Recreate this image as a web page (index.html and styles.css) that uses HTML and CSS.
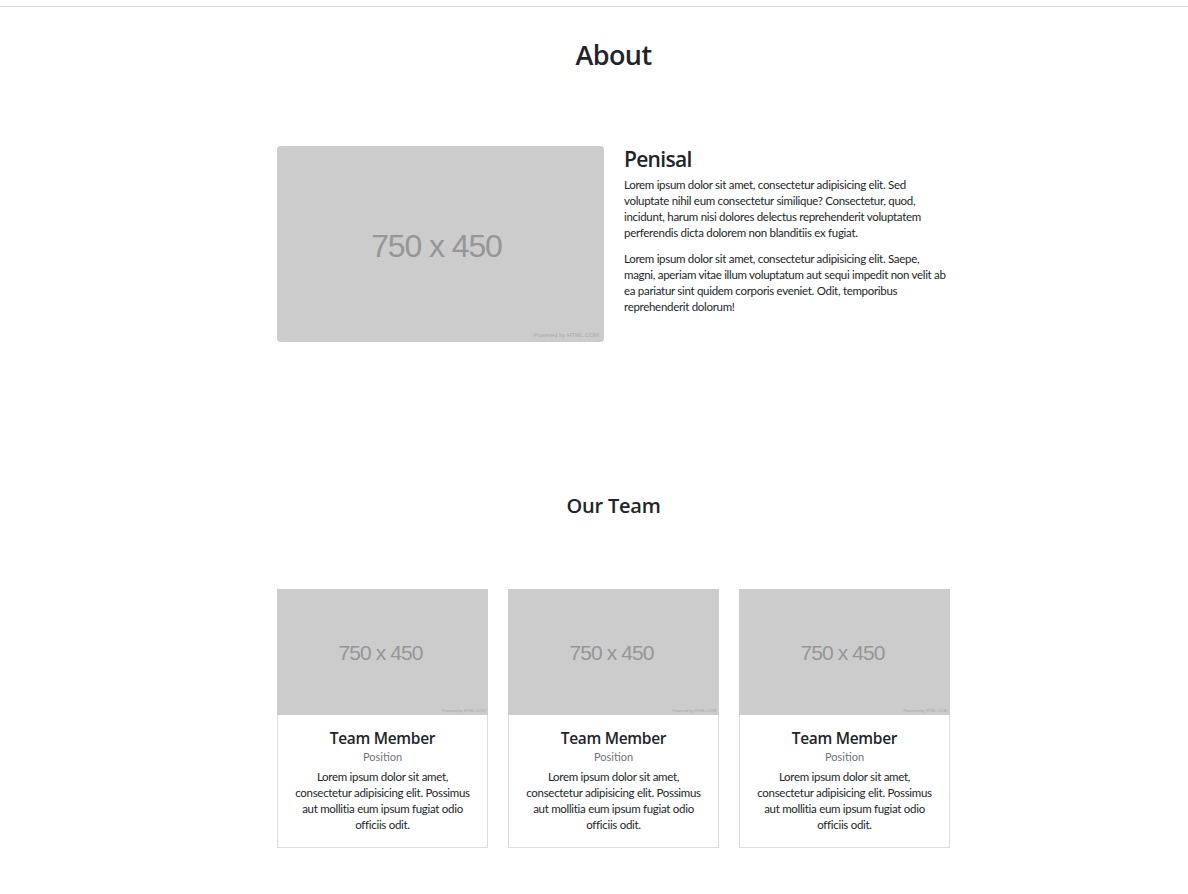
FILE: index.html
```html
<!DOCTYPE html>
<html lang="en">
<head>
<meta charset="utf-8">
<title>About</title>
<link rel="stylesheet" href="styles.css">
</head>
<body>
<div class="topbar"></div>
<main class="page">
  <section class="about">
    <h1 class="page-title">About</h1>
    <div class="about-row">
      <div class="ph ph-lg">
        <span class="ph-text">750 x 450</span>
        <span class="ph-credit">Powered by HTML.COM</span>
      </div>
      <div class="about-text">
        <h3 class="about-name">Penisal</h3>
        <p>Lorem ipsum dolor sit amet, consectetur adipisicing elit. Sed voluptate nihil eum consectetur similique? Consectetur, quod, incidunt, harum nisi dolores delectus reprehenderit voluptatem perferendis dicta dolorem non blanditiis ex fugiat.</p>
        <p>Lorem ipsum dolor sit amet, consectetur adipisicing elit. Saepe, magni, aperiam vitae illum voluptatum aut sequi impedit non velit ab ea pariatur sint quidem corporis eveniet. Odit, temporibus reprehenderit dolorum!</p>
      </div>
    </div>
  </section>
  <section class="team">
    <h2 class="team-title">Our Team</h2>
    <div class="team-grid">
      <div class="card">
        <div class="ph ph-sm">
          <span class="ph-text">750 x 450</span>
          <span class="ph-credit">Powered by HTML.COM</span>
        </div>
        <div class="card-body">
          <h4 class="card-title">Team Member</h4>
          <div class="card-sub">Position</div>
          <p class="card-text">Lorem ipsum dolor sit amet, consectetur adipisicing elit. Possimus aut mollitia eum ipsum fugiat odio officiis odit.</p>
        </div>
      </div>
      <div class="card">
        <div class="ph ph-sm">
          <span class="ph-text">750 x 450</span>
          <span class="ph-credit">Powered by HTML.COM</span>
        </div>
        <div class="card-body">
          <h4 class="card-title">Team Member</h4>
          <div class="card-sub">Position</div>
          <p class="card-text">Lorem ipsum dolor sit amet, consectetur adipisicing elit. Possimus aut mollitia eum ipsum fugiat odio officiis odit.</p>
        </div>
      </div>
      <div class="card">
        <div class="ph ph-sm">
          <span class="ph-text">750 x 450</span>
          <span class="ph-credit">Powered by HTML.COM</span>
        </div>
        <div class="card-body">
          <h4 class="card-title">Team Member</h4>
          <div class="card-sub">Position</div>
          <p class="card-text">Lorem ipsum dolor sit amet, consectetur adipisicing elit. Possimus aut mollitia eum ipsum fugiat odio officiis odit.</p>
        </div>
      </div>
    </div>
  </section>
</main>
</body>
</html>
```
FILE: styles.css
```css
* { box-sizing: border-box; }

html, body {
  margin: 0;
  padding: 0;
  background: #fff;
}

body {
  font-family: Lato, "Open Sans", sans-serif;
  color: #212529;
  font-size: 11.5px;
  line-height: 16px;
  letter-spacing: -0.3px;
}

.topbar {
  height: 7px;
  border-bottom: 1px solid #dcdcdc;
}

.page {
  padding-left: 39px;
}

.about, .team {
  width: 673px;
  margin: 0 auto;
}

.page-title,
.about-name,
.team-title,
.card-title {
  font-family: "Open Sans", "Noto Sans", sans-serif;
  font-weight: 600;
  color: #212529;
}

.page-title {
  margin: 31px 0 0;
  text-align: center;
  font-size: 27px;
  line-height: 34px;
  letter-spacing: -0.6px;
}

.about-row {
  margin-top: 74px;
  display: flex;
  gap: 20px;
  align-items: flex-start;
}

.ph {
  position: relative;
  background: #cccccc;
  display: flex;
  align-items: center;
  justify-content: center;
  flex: none;
  letter-spacing: normal;
}

.ph-text {
  font-family: "Liberation Sans", Arial, sans-serif;
  color: #969696;
}

.ph-credit {
  position: absolute;
  font-family: "Liberation Sans", Arial, sans-serif;
  color: #a9a9a9;
  white-space: nowrap;
}

.ph-lg {
  width: 327px;
  height: 196px;
  border-radius: 4px;
}

.ph-lg .ph-text {
  font-size: 32px;
  letter-spacing: -1.1px;
  margin: 4px 8px 0 0;
}

.ph-lg .ph-credit {
  right: 5px;
  bottom: 3px;
  font-size: 6px;
  line-height: 7px;
}

.about-text {
  flex: 1;
  min-width: 0;
}

.about-name {
  margin: 0 0 5px;
  font-size: 21px;
  line-height: 26px;
  letter-spacing: -0.7px;
}

.about-text p {
  margin: 0 0 10px;
}

.team-title {
  margin: 152px 0 0;
  text-align: center;
  font-size: 20px;
  line-height: 24px;
  letter-spacing: -0.2px;
}

.team-grid {
  margin-top: 71px;
  display: grid;
  grid-template-columns: repeat(3, 1fr);
  gap: 20px;
}

.card {
  border: 1px solid #dcdcdc;
  background: #fff;
}

.ph-sm {
  height: 126px;
  margin: -1px -1px 0;
}

.ph-sm .ph-text {
  font-size: 21px;
  letter-spacing: -0.9px;
  margin: 2px 4px 0 0;
}

.ph-sm .ph-credit {
  right: 3px;
  bottom: 2px;
  font-size: 4px;
  line-height: 5px;
}

.card-body {
  padding: 13px 15px 14px;
  text-align: center;
}

.card-title {
  margin: 0;
  font-size: 15.5px;
  line-height: 20px;
  letter-spacing: -0.3px;
}

.card-sub {
  font-size: 11px;
  line-height: 17px;
  letter-spacing: normal;
  color: #6c757d;
  margin-bottom: 4px;
}

.card-text {
  margin: 0;
}
```
